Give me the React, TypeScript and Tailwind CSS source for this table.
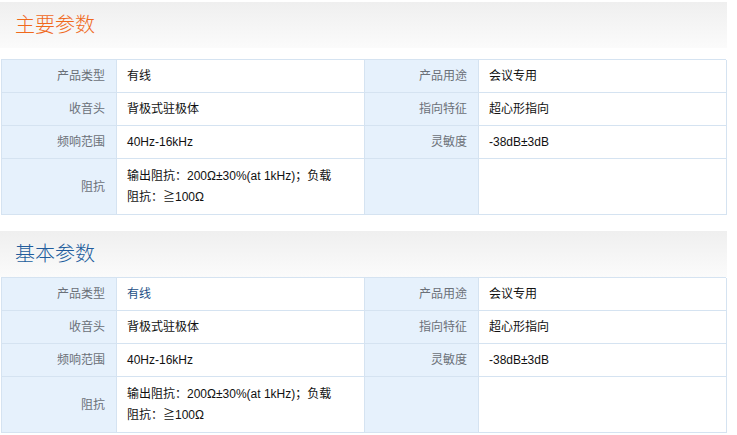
import React from "react";

type Row = { l1: string; v1: React.ReactNode; l2: string; v2: React.ReactNode; tall?: boolean };

const rows = (blue: boolean): Row[] => [
  { l1: "产品类型", v1: <span className={blue ? "text-[#1d4f86]" : ""}>有线</span>, l2: "产品用途", v2: "会议专用" },
  { l1: "收音头", v1: "背极式驻极体", l2: "指向特征", v2: "超心形指向" },
  { l1: "频响范围", v1: "40Hz-16kHz", l2: "灵敏度", v2: "-38dB±3dB" },
  {
    l1: "阻抗",
    v1: (
      <>
        输出阻抗：200Ω±30%(at 1kHz)；负载
        <br />
        阻抗：≧100Ω
      </>
    ),
    l2: "",
    v2: "",
    tall: true,
  },
];

function Table({ blue }: { blue: boolean }) {
  return (
    <div className="ml-px w-[725px] border-t border-l border-[#d5e3f1]">
      {rows(blue).map((r, i) => (
        <div
          key={i}
          className={`grid grid-cols-[115px_248px_114px_248px] ${r.tall ? "h-[56px]" : "h-[33px]"}`}
        >
          <div className="flex items-center justify-end border-r border-b border-[#d5e3f1] bg-[#e6f1fc] pr-[11px] text-[12px] text-[#6b7078]">
            {r.l1}
          </div>
          <div className="flex items-center border-r border-b border-[#d5e3f1] bg-white pl-[10px] text-[12px] leading-[21px] text-[#111]">
            <div>{r.v1}</div>
          </div>
          <div className="flex items-center justify-end border-r border-b border-[#d5e3f1] bg-[#e6f1fc] pr-[11px] text-[12px] text-[#6b7078]">
            {r.l2}
          </div>
          <div className="flex items-center border-r border-b border-[#d5e3f1] bg-white pl-[10px] text-[12px] text-[#111]">
            {r.v2}
          </div>
        </div>
      ))}
    </div>
  );
}

function Header({ title, color }: { title: string; color: string }) {
  return (
    <div className="flex h-[46px] w-[727px] items-center bg-gradient-to-b from-[#efefef] to-[#fbfbfb] pl-[15px]">
      <span className={`text-[20px] font-light ${color}`}>{title}</span>
    </div>
  );
}

export default function App() {
  return (
    <div
      className="h-[435px] w-[737px] overflow-hidden bg-white"
      style={{ fontFamily: '"Liberation Sans", "Noto Sans CJK SC", sans-serif' }}
    >
      <div className="h-[2px]" />
      <Header title="主要参数" color="text-[#f0691c]" />
      <div className="h-[11px]" />
      <Table blue={false} />
      <div className="h-[16px]" />
      <Header title="基本参数" color="text-[#215c9c]" />
      <Table blue={true} />
    </div>
  );
}
